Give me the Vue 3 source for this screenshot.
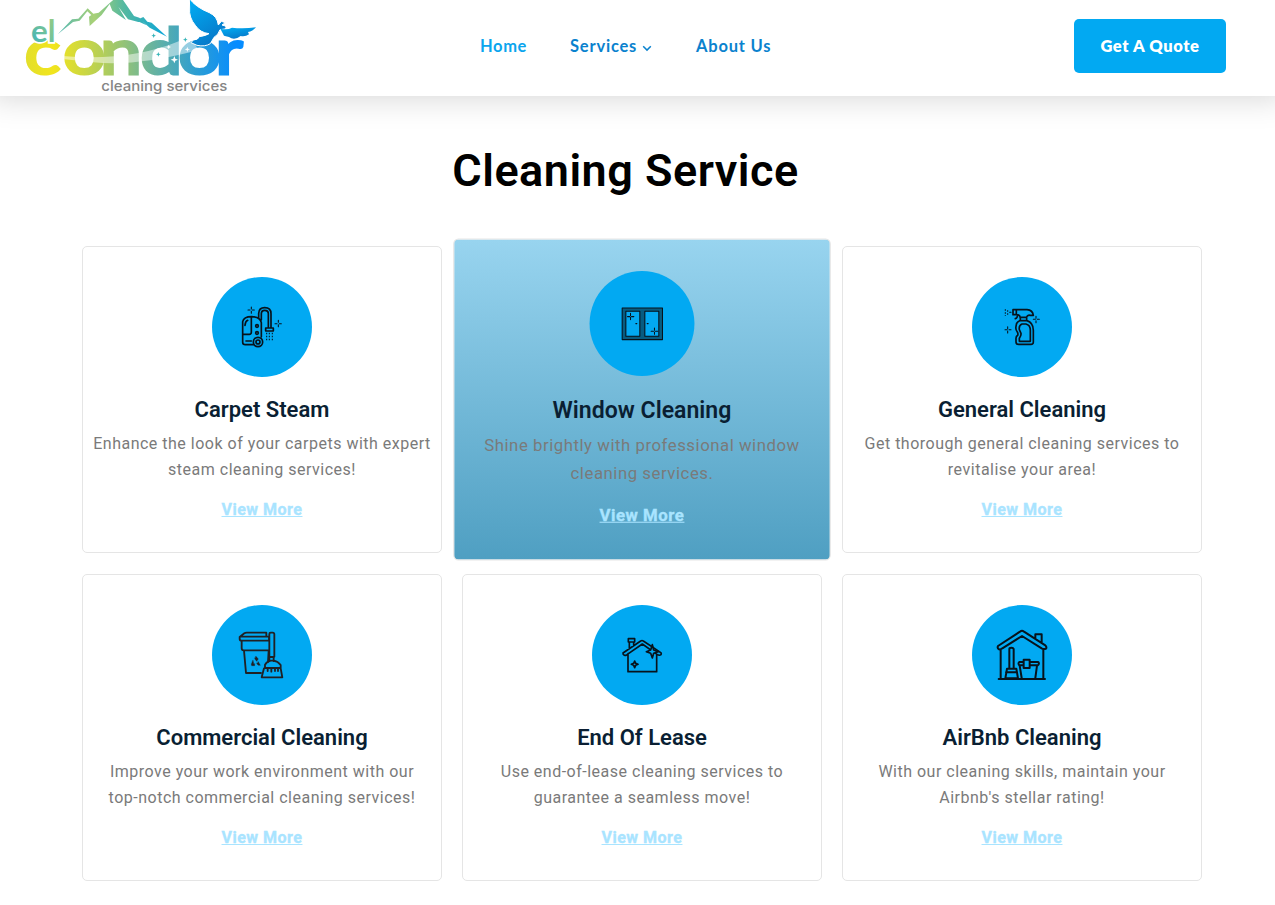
<script setup>
const cards = [
  { icon: 'steam', title: 'Carpet Steam', lines: ['Enhance the look of your carpets with expert', 'steam cleaning services!'] },
  { icon: 'window', title: 'Window Cleaning', lines: ['Shine brightly with professional window', 'cleaning services.'], active: true },
  { icon: 'spray', title: 'General Cleaning', lines: ['Get thorough general cleaning services to', 'revitalise your area!'] },
  { icon: 'bin', title: 'Commercial Cleaning', lines: ['Improve your work environment with our', 'top-notch commercial cleaning services!'] },
  { icon: 'house', title: 'End Of Lease', lines: ['Use end-of-lease cleaning services to', 'guarantee a seamless move!'] },
  { icon: 'airbnb', title: 'AirBnb Cleaning', lines: ['With our cleaning skills, maintain your', "Airbnb's stellar rating!"] },
]
</script>

<template>
  <div class="page">
    <header class="header">
      <svg class="logo" viewBox="0 0 780 288" width="260" height="96">
        <defs>
          <linearGradient id="word" gradientUnits="userSpaceOnUse" x1="40" y1="0" x2="575" y2="0">
            <stop offset="0" stop-color="#e3df2c" /><stop offset=".13" stop-color="#f2e51d" />
            <stop offset=".36" stop-color="#b5cf57" /><stop offset=".57" stop-color="#72b796" />
            <stop offset=".8" stop-color="#2f9fd0" /><stop offset="1" stop-color="#068cff" />
          </linearGradient>
          <linearGradient id="peak" gradientUnits="userSpaceOnUse" x1="145" y1="0" x2="470" y2="0">
            <stop offset="0" stop-color="#53b8b2" /><stop offset=".33" stop-color="#a9d176" />
            <stop offset=".6" stop-color="#55b99f" /><stop offset="1" stop-color="#08a5db" />
          </linearGradient>
          <linearGradient id="small" x1="0" y1="1" x2="1" y2="0">
            <stop offset="0" stop-color="#38b2bf" /><stop offset="1" stop-color="#a2cf7b" />
          </linearGradient>
          <linearGradient id="wing" x1="0" y1="0" x2=".5" y2="1">
            <stop offset="0" stop-color="#00b0f6" /><stop offset="1" stop-color="#0779c9" />
          </linearGradient>
        </defs>
        <path fill="url(#peak)" d="M144 102 L186 58 L205 56 L233 25 L250 41 L266 38 L314 -4 L330 -4 L372 51 L388 56 L400 51 L412 65 L425 68 L471 110 L419 83 L399 65 L385 66 L354 58 L325 20 L348 60 L307 32 L299 12 L275 45 L239 78 L237 50 L244 45 L232 34 L209 62 L189 66 Z" />
        <path fill="url(#peak)" d="M328 -3 L375 60 L410 76 L388 53 L372 48 L337 -3 Z" />
        <text class="word" transform="scale(1.18 1)" x="37 135 229 331 428 522" y="223" fill="url(#word)">condor</text>
        <text class="el" x="63 113" y="127" fill="url(#small)">el</text>
        <path fill="#fff" opacity=".48" d="M158 168 Q360 185 510 122 L550 126 L566 150 Q380 200 250 187 L164 178 Z" />
        <path fill="#fff" d="M493 168l3 8 8 3-8 3-3 8-3-8-8-3 8-3zM532 140l2 6 6 2-6 2-2 6-2-6-6-2 6-2zM476 134l2 5 5 2-5 2-2 5-2-5-5-2 5-2z" />
        <path fill="#36b4b8" d="M431 100l2 5 5 2-5 2-2 5-2-5-5-2 5-2zM445 156l2 5 5 2-5 2-2 5-2-5-5-2 5-2zM526 112l2 5 5 2-5 2-2 5-2-5-5-2 5-2z" />
        <path fill="url(#wing)" stroke="#fff" stroke-width="3" d="M538 -5 Q557 22 598 38 Q622 49 625 75 L634 64 L646 68 L636 75 Q654 79 645 87 L630 89 Q625 105 612 112 L601 131 Q585 141 561 136 L543 128 L550 120 Q564 120 568 110 Q588 107 597 101 Q570 98 556 76 Q536 52 539 24 Z" />
        <path fill="url(#wing)" d="M631 86 Q652 91 666 83 Q699 87 738 82 Q728 94 714 96 L717 103 Q706 111 692 108 Q673 123 657 111 L642 107 Z" />
        <text class="tag" x="274" y="273" textLength="378" lengthAdjust="spacingAndGlyphs">cleaning services</text>
      </svg>
      <nav class="nav">
        <a class="home">Home</a>
        <a class="services">Services
          <svg class="chevron" viewBox="0 0 10 7" width="10" height="7"><path d="M1.2 1.3 5 5.1 8.8 1.3" /></svg>
        </a>
        <a class="about">About Us</a>
      </nav>
      <a class="quote">Get A Quote</a>
    </header>

    <main>
      <h1>Cleaning Service</h1>
      <section class="grid">
        <article v-for="c in cards" :key="c.title" class="card" :class="{ active: c.active }">
          <div class="disc">
            <svg v-if="c.icon === 'steam'" class="icon" viewBox="6 6 300 300">
              <path d="M98 140Q101 125 125 125Q151 125 154 143V186M98 140V202Q98 209 106 209H130M98 178H118Q124 178 124 172V126M146 128V115Q147 98 164 98Q183 98 183 116V158M154 134V116Q154 106 164 106Q175 106 175 116V158M167 159H190V168H167ZM108 198H124M105 151Q106 139 113 136" />
              <circle cx="144" cy="201" r="14" /><circle cx="144" cy="201" r="6" />
              <circle cx="141" cy="153" r="4" /><circle cx="141" cy="174" r="4" />
              <path class="thin dash" stroke-dasharray="5 4" d="M170 173V197M178 173V197M187 173V197" />
              <path class="thin" d="M124 96v6M124 109v6M114 105h6M127 105h6M205 136v6M205 149v6M195 146h6M208 146h6" />
            </svg>
            <svg v-else-if="c.icon === 'window'" class="icon" viewBox="10 9 315 315">
              <path fill="#075c81" fill-rule="evenodd" stroke="none" d="M108 120H229V215H108ZM119 130V204H161V130ZM176 130V204H218V130Z" />
              <path class="thin" d="M108 120H229V215H108ZM119 130H161V205H119ZM176 130H218V205H176Z" />
              <path class="thin" d="M149 167H152M183 167H186" />
              <path class="thin" d="M133 136v7M133 148v7M124 146h7M136 146h7M205 180v7M205 192v7M195 190h7M208 190h7" />
            </svg>
            <svg v-else-if="c.icon === 'spray'" class="icon" viewBox="6 6 300 300">
              <path d="M129 104H139V119H129ZM139 104H171Q188 105 190 121H180Q173 119 169 127H150Q151 120 139 119M151 128V137M170 128V137M142 121Q143 129 136 131M149 137H171Q190 143 190 166V201Q190 208 183 208H146Q138 208 138 200V190Q138 184 143 181Q145 176 142 171Q136 164 138 154Q139 141 149 137ZM156 147H168Q181 150 181 166V199H148V190Q154 182 153 175L148 164Q146 151 156 147Z" />
              <path class="thin dash" stroke-dasharray="4 5" d="M106 103V123M113 106V121" /><path class="thin" d="M119 112h4" />
              <path class="thin" d="M198 124v6M198 137v6M190 133h6M202 133h6M113 155v6M113 168v6M105 164h6M117 164h6" />
            </svg>
            <svg v-else-if="c.icon === 'bin'" class="icon bin" viewBox="6 6 300 300">
              <path d="M89 109V102L103 91Q106 89 110 89H169V99M94 101H177V113H95Q89 113 89 108M95 113V136Q95 142 101 142H177M102 143L108 210H153M178 174V93Q178 89 182 89H188Q193 89 193 94V161M178 162H191V174M176 143L174 177" />
              <path d="M165 195V185Q171 175 182 173H190Q204 175 212 186V195ZM162 196L155 223H217L212 196M173 197V204M184 197V206M195 197V204M204 197V204" />
              <path fill="#202124" stroke-width="1" d="M138 160L145 168L140 175L134 167ZM129 172L131 181L124 187L126 178ZM145 176L151 187H145L140 182ZM125 182H134V188H126Z" />
            </svg>
            <svg v-else-if="c.icon === 'house'" class="icon house" viewBox="6 6 300 300">
              <path d="M114 152V206H200V155M99 150Q98 154 103 157Q106 158 111 155L157 123L201 154Q208 159 213 155Q216 149 208 146L160 114Q156 111 152 114ZM118 138V118M131 129V118M115 107H134V117H115Z" />
              <path fill="#02a7f0" d="M187 125L191 141L205 146L191 151L187 165L182 151L169 146L182 141ZM134 174L137 181L144 184L137 187L134 194L131 187L124 184L131 181Z" />
            </svg>
            <svg v-else class="icon airbnb" viewBox="6 6 300 300">
              <path d="M84 129Q81 136 87 139Q92 140 97 136L156 99L215 136Q222 140 228 137Q231 132 226 127L162 86Q156 81 150 86ZM92 141V227M220 141V227M86 228H225M196 105V94H215V119M118 194V138Q118 134 124 134Q131 134 131 139V194M111 197H139L144 226H106ZM108 208H141M161 187H148Q143 181 148 177H161M179 177H205Q209 183 203 187H179M149 188L155 225M201 188L196 225M161 170H179V195H161Z" />
            </svg>
          </div>
          <h2>{{ c.title }}</h2>
          <p><span v-for="l in c.lines" :key="l">{{ l }}</span></p>
          <a class="more">View More</a>
        </article>
      </section>
    </main>
  </div>
</template>

<style>
body { margin: 0; overflow: hidden; background: #fff; }
</style>

<style scoped>
.page { width: 1275px; height: 905px; overflow: hidden; font-family: Roboto, sans-serif; background: #fff; }
.header { display: flex; height: 96px; box-sizing: border-box; padding-left: 10px; background: #fff; box-shadow: 0 -8px 30px 10px rgba(0, 0, 0, .17); }
.logo { display: block; flex: none; }
.word { font: 400 191px Lato, sans-serif; stroke: url(#word); stroke-width: 9px; }
.el { font: 700 94px Lato, sans-serif; stroke: #fff; stroke-width: 10px; paint-order: stroke; }
.tag { font: 500 42px Inter, sans-serif; fill: #858585; }
.nav { display: flex; width: 804px; box-sizing: border-box; padding: 36px 0 0 210px; font: 700 16.5px/20px Lato, sans-serif; letter-spacing: .8px; color: #0a82ce; white-space: nowrap; }
.home { width: 90px; color: #0ba5ee; letter-spacing: .6px; }
.services { width: 126px; }
.chevron { fill: none; stroke: #0a82ce; stroke-width: 1.5; }
.quote { width: 152px; height: 54px; margin-top: 19px; border-radius: 5px; background: #02a9f2; color: #fff; text-align: center; font: 800 16.5px/55px Lato, sans-serif; letter-spacing: .6px; }
h1 { margin: 44px 0 0; width: 1251px; text-align: center; font-size: 45px; line-height: 62px; font-weight: 600; letter-spacing: .5px; color: #000; }
.grid { display: grid; grid-template-columns: repeat(3, 360px); gap: 21px 20px; margin: 44px 0 0 82px; }
.card { height: 307px; box-sizing: border-box; border: 1px solid #e5e5e5; border-radius: 5px; padding-top: 30px; text-align: center; background: #fff; }
.active { transform: scale(1.049); background: linear-gradient(#98d4ef, #4f9fc2); }
.disc { width: 100px; height: 100px; margin: 0 auto; border-radius: 50%; background: #02a9f2; }
.icon { display: block; width: 100px; height: 100px; fill: none; stroke: #07131c; stroke-width: 5; stroke-linejoin: round; stroke-linecap: round; }
.icon .thin { stroke-width: 3.2; }
.icon .dash { stroke-linecap: butt; }
.bin { stroke: #202124; stroke-width: 5.5; }
.airbnb { stroke-width: 6; }
h2 { margin: 17px 0 0; font-size: 22px; line-height: 32px; font-weight: 600; color: #0a1f33; }
p { margin: 5px 0 0; font-size: 16px; line-height: 26px; letter-spacing: .5px; color: #7a7a7a; }
p span { display: block; white-space: nowrap; }
.more { display: block; margin-top: 14px; font-size: 16px; line-height: 26px; font-weight: 700; letter-spacing: .5px; color: #a9e4ff; -webkit-text-stroke: .35px #a9e4ff; text-decoration: underline; }
</style>
